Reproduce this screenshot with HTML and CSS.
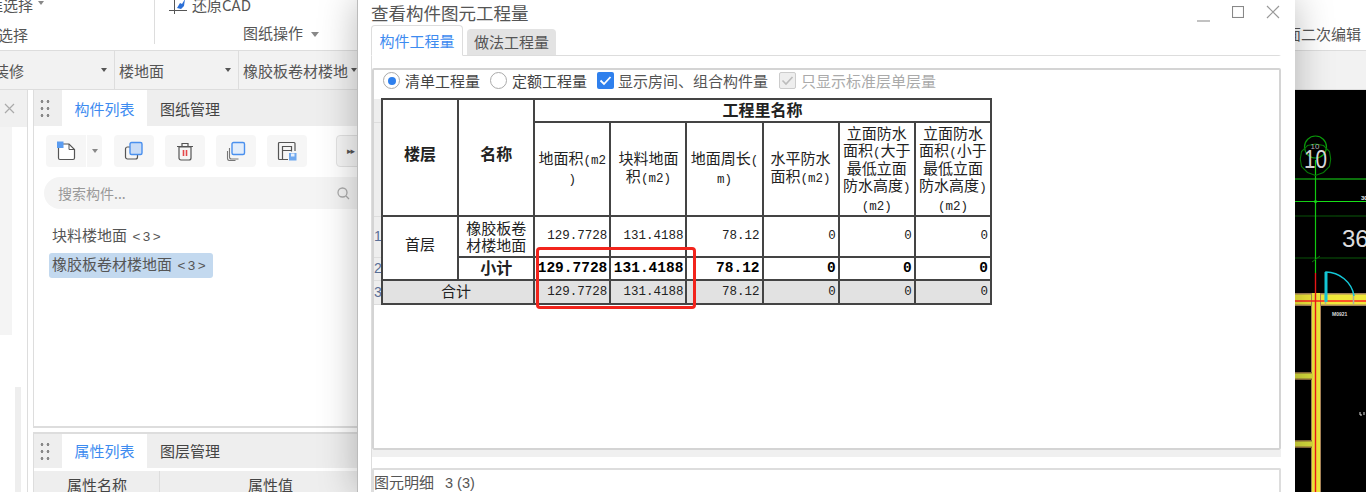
FILE: index.html
```html
<!DOCTYPE html>
<html lang="zh-CN">
<head>
<meta charset="utf-8">
<title>查看构件图元工程量</title>
<link rel="stylesheet" href="styles.css">
</head>
<body>
<div class="app">
  <header class="ribbon">
    <div class="rb-left">
      <div class="rb-line rb-clip">框选择<i class="caret caret-s"></i></div>
      <div class="rb-line rb-sel">选择</div>
    </div>
    <div class="rb-mid">
      <div class="rb-line rb-clip rb-restore">
        <svg class="ic-restore" width="18" height="20" viewBox="0 0 18 20"><path d="M0 15.500H18M5.500 3V19" fill="none" stroke="#555" stroke-width="1"/><path d="M8 13l3-5 2 1 3-5-1 7-3 3z" fill="#2c6fd6"/></svg>
        还原CAD
      </div>
      <div class="rb-line rb-ops">图纸操作<i class="caret"></i></div>
    </div>
    <div class="rb-right">面二次编辑</div>
  </header>

  <div class="selectors">
    <div class="sel sel-1"><span class="sel-t1">装修</span><i class="caret caret-d"></i></div>
    <div class="sel sel-2"><span>楼地面</span><i class="caret caret-d"></i></div>
    <div class="sel sel-3"><span>橡胶板卷材楼地</span><i class="caret caret-d"></i></div>
  </div>

  <div class="work">
    <aside class="side">
      <div class="side-head"><svg width="11" height="11" viewBox="0 0 11 11"><path d="M1 1l9 9M10 1l-9 9" stroke="#aaa" stroke-width="1.200" fill="none"/></svg></div>
      <div class="side-body"><div class="side-gray"></div><div class="side-track"></div></div>
    </aside>

    <section class="panels">
      <div class="panel panel-top">
        <div class="tabs">
          <span class="grip"></span>
          <span class="ptab ptab-on">构件列表</span>
          <span class="ptab">图纸管理</span>
        </div>
        <div class="tools">
          <span class="tbtn tbtn-split">
            <svg width="20" height="20" viewBox="0 0 20 20"><path d="M2.500 3H13l5.500 5.500V17a1.500 1.500 0 0 1-1.500 1.500H4A1.500 1.500 0 0 1 2.500 17z" fill="#fff" stroke="#555" stroke-width="1.200"/><path d="M13 3v5.500h5.500" fill="none" stroke="#555"/><rect x="1" y="0.500" width="6.500" height="6.500" fill="#5b9cf0"/></svg>
          </span><span class="tbtn-drop"><i class="caret caret-xs"></i></span>
          <span class="tbtn">
            <svg width="20" height="20" viewBox="0 0 20 20"><rect x="1.500" y="6" width="12" height="12" rx="2" fill="none" stroke="#555" stroke-width="1.200"/><rect x="6" y="1.500" width="12" height="12" rx="1.500" fill="#c9dcf6" stroke="#4a90ee" stroke-width="1.400"/></svg>
          </span>
          <span class="tbtn">
            <svg width="20" height="20" viewBox="0 0 20 20"><path d="M4 6h12v11a2 2 0 0 1-2 2H6a2 2 0 0 1-2-2z" fill="none" stroke="#555" stroke-width="1.200"/><path d="M2 5.500h16M7 5V2.500h6V5" fill="none" stroke="#555" stroke-width="1.200"/><path d="M8.500 9v6M11.500 9v6" stroke="#e5474a" stroke-width="1.600"/></svg>
          </span>
          <span class="tbtn">
            <svg width="20" height="20" viewBox="0 0 20 20"><path d="M3.500 7v9a2 2 0 0 0 2 2h7M1.500 10v7.500a2 2 0 0 0 2 2h6" fill="none" stroke="#777" stroke-width="1.100"/><rect x="6" y="1.500" width="12.500" height="12" rx="1.500" fill="#e2edfb" stroke="#4a90ee" stroke-width="1.400"/></svg>
          </span>
          <span class="tbtn">
            <svg width="20" height="20" viewBox="0 0 20 20"><path d="M11 18.500H2.500a1 1 0 0 1-1-1V2.500a1 1 0 0 1 1-1H17a1 1 0 0 1 1 1V10" fill="none" stroke="#555" stroke-width="1.200"/><path d="M5.500 18V5.500h9v5M5.500 9.500h9" fill="none" stroke="#555" stroke-width="1.200"/><rect x="12" y="12" width="7.500" height="7.500" fill="#6fa8ee"/><rect x="14" y="12.500" width="3.500" height="3" fill="#e8f0fb"/></svg>
          </span>
          <span class="tbtn tbtn-more"><span class="more">▸▸</span></span>
        </div>
        <div class="search">
          <span class="search-ph">搜索构件...</span>
          <svg class="search-ic" width="13" height="13" viewBox="0 0 13 13"><circle cx="5.500" cy="5.500" r="4.500" fill="none" stroke="#aaa" stroke-width="1.300"/><path d="M9 9l3 3" stroke="#aaa" stroke-width="1.300"/></svg>
        </div>
        <ul class="items">
          <li class="item">块料楼地面 <span class="count">&lt;3&gt;</span></li>
          <li class="item item-on">橡胶板卷材楼地面 <span class="count">&lt;3&gt;</span></li>
        </ul>
      </div>
      <div class="panel panel-bottom">
        <div class="tabs tabs-b">
          <span class="grip"></span>
          <span class="ptab ptab-on">属性列表</span>
          <span class="ptab">图层管理</span>
        </div>
        <div class="prop-head"><span class="prop-a">属性名称</span><span class="prop-b">属性值</span></div>
      </div>
    </section>

    <div class="spacer"></div>

    <div class="cad">
      <svg width="71" height="402" viewBox="0 0 71 402">
        <rect width="71" height="402" fill="#000"/>
        <path d="M0 89H71M0 111.500H71" stroke="#18e018" stroke-width="1"/>
        <path d="M0 126H71M0 168H71" stroke="#0a5a0a" stroke-width="1.200"/>
        <path d="M20.500 70V183" stroke="#12d012" stroke-width="1.200"/>
        <path d="M17 172l8-6" stroke="#0a7a0a"/>
        <circle cx="20.500" cy="111.500" r="1.500" fill="#18e018"/>
        <circle cx="20.500" cy="57" r="11" fill="none" stroke="#0ba00b" stroke-width="1.200"/>
        <path d="M20.500 54l8 1.500 6 6 1.200 7.500-1.200 7.500-6 6-8 3-8-3-6-6-1.200-7.500 1.200-7.500 6-6z" fill="none" stroke="#087f08" stroke-width="1.100"/>
        <text x="20" y="59" class="cad-tiny" text-anchor="middle">10</text>
        <text x="9" y="78" class="cad-big" textLength="23" lengthAdjust="spacingAndGlyphs">10</text>
        <text x="66" y="110" class="cad-mini">30</text>
        <text x="47" y="157" class="cad-num">36</text>
        <rect x="0" y="203" width="71" height="13" fill="#a9865a"/>
        <rect x="0" y="204.500" width="71" height="10" fill="#f0e83a"/>
        <rect x="16" y="203" width="10" height="199" fill="#a9865a"/>
        <rect x="17" y="203" width="8" height="199" fill="#f0e83a"/>
        <path d="M0 211H71" stroke="#f22" stroke-width="1.400"/>
        <path d="M20.500 183V402" stroke="#f01818" stroke-width="1.400"/>
        <path d="M30.500 204V214M58.500 204V214" stroke="#b0b0a0" stroke-width="1.500"/>
        <path d="M31 212V182c13 0 26 10 28 24" fill="none" stroke="#14c8d8" stroke-width="1.500"/>
        <path d="M31 212V182" fill="none" stroke="#14c8d8" stroke-width="3"/>
        <text x="37" y="226" class="cad-mini cad-door">M0921</text>
        <rect x="0" y="282" width="17" height="8" fill="#8a6a3a"/>
        <rect x="0" y="283.500" width="18" height="5" fill="#d8dc3c"/>
        <rect x="0" y="350" width="17" height="8" fill="#8a6a3a"/>
        <rect x="0" y="351.500" width="18" height="5" fill="#d8dc3c"/>
        <path d="M65 322v3h2M69 322v3" stroke="#ddd" stroke-width="1"/>
      </svg>
    </div>
  </div>

  <div class="dialog">
    <div class="dlg-title">
      <span class="dlg-name">查看构件图元工程量</span>
      <div class="dlg-ctrl">
        <svg width="13" height="13" viewBox="0 0 13 13"><path d="M0 12H13" stroke="#999" stroke-width="1.200"/></svg>
        <svg width="12" height="12" viewBox="0 0 12 12"><rect x="0.500" y="0.500" width="11" height="11" fill="none" stroke="#888" stroke-width="1.100"/></svg>
        <svg width="14" height="14" viewBox="0 0 14 14"><path d="M1 1l12 12M13 1L1 13" stroke="#999" stroke-width="1.200"/></svg>
      </div>
    </div>
    <div class="dlg-tabs">
      <span class="dtab dtab-on">构件工程量</span>
      <span class="dtab">做法工程量</span>
    </div>
    <div class="pane">
      <div class="inner">
        <div class="opts">
          <span class="radio radio-on"></span><span class="opt opt-a">清单工程量</span>
          <span class="radio radio-2"></span><span class="opt opt-b">定额工程量</span>
          <span class="check"><svg width="17" height="17" viewBox="0 0 17 17"><path d="M3.500 8.500l3.500 3.500 6.500-7" fill="none" stroke="#fff" stroke-width="1.800"/></svg></span><span class="opt opt-c">显示房间、组合构件量</span>
          <span class="check check-off"><svg width="17" height="17" viewBox="0 0 17 17"><path d="M3.500 8.500l3.500 3.500 6.500-7" fill="none" stroke="#bbb" stroke-width="1.600"/></svg></span><span class="opt opt-off">只显示标准层单层量</span>
        </div>
        <div class="table-wrap">
          <table class="qty">
            <colgroup>
              <col class="c-idx"><col class="c-w"><col class="c-w"><col class="c-w"><col class="c-w"><col class="c-w"><col class="c-w"><col class="c-w"><col class="c-w">
            </colgroup>
            <tr class="r-h1">
              <td class="idx"></td>
              <th class="th-span" rowspan="2">楼层</th>
              <th class="th-span" rowspan="2">名称</th>
              <th class="th-top" colspan="6">工程里名称</th>
            </tr>
            <tr class="r-h2">
              <td class="idx"></td>
              <td class="hc">地面积<span class="n">(m2</span><br><span class="n">)</span></td>
              <td class="hc">块料地面<br>积<span class="n">(m2)</span></td>
              <td class="hc">地面周长<span class="n">(</span><br><span class="n">m)</span></td>
              <td class="hc">水平防水<br>面积<span class="n">(m2)</span></td>
              <td class="hc tight">立面防水<br>面积<span class="n">(</span>大于<br>最低立面<br>防水高度<span class="n">)</span><br><span class="n">(m2)</span></td>
              <td class="hc tight">立面防水<br>面积<span class="n">(</span>小于<br>最低立面<br>防水高度<span class="n">)</span><br><span class="n">(m2)</span></td>
            </tr>
            <tr class="r-1">
              <td class="idx">1</td>
              <td class="ctr floor" rowspan="2">首层</td>
              <td class="ctr name">橡胶板卷<br>材楼地面</td>
              <td class="v">129.7728</td><td class="v">131.4188</td><td class="v">78.12</td><td class="v">0</td><td class="v">0</td><td class="v">0</td>
            </tr>
            <tr class="r-2">
              <td class="idx">2</td>
              <th class="th-sub">小计</th>
              <td class="v b">129.7728</td><td class="v b">131.4188</td><td class="v b">78.12</td><td class="v b">0</td><td class="v b">0</td><td class="v b">0</td>
            </tr>
            <tr class="r-3">
              <td class="idx">3</td>
              <td class="ctr total" colspan="2">合计</td>
              <td class="v">129.7728</td><td class="v">131.4188</td><td class="v">78.12</td><td class="v">0</td><td class="v">0</td><td class="v">0</td>
            </tr>
          </table>
          <div class="mark"></div>
        </div>
      </div>
      <div class="band"></div>
      <div class="detail">图元明细<span class="detail-n">3 (3)</span></div>
    </div>
  </div>
</div>
</body>
</html>
```
FILE: styles.css
```css
* { box-sizing: border-box; }
html, body { margin: 0; padding: 0; }
body {
  width: 1366px; height: 492px; overflow: hidden; background: #fff;
  font-family: "Noto Sans CJK SC", "Liberation Sans", sans-serif;
  font-size: 15px; color: #555;
}
.app { position: relative; width: 1366px; height: 492px; overflow: hidden; display: flex; flex-direction: column; }

.caret { display: inline-block; width: 0; height: 0; border: 4px solid transparent; border-top: 5px solid #888; border-bottom: 0; margin-left: 8px; vertical-align: middle; }
.caret-s { border-width: 4px 3px 0; margin-left: 5px; vertical-align: 6px; }
.caret-d { border-width: 4px 3px 0; border-top-color: #555; margin-left: 0; }
.caret-xs { border-width: 4px 3px 0; margin-left: 0; }

/* ribbon */
.ribbon { height: 51px; flex: none; display: flex; border-bottom: 1px solid #ddd; background: #fff; overflow: hidden; }
.rb-left { width: 155px; border-right: 1px solid #ddd; height: 44px; }
.rb-line { line-height: 20px; white-space: nowrap; }
.rb-clip { margin-top: -5px; height: 20px; }
.rb-left .rb-clip { margin-left: -12px; }
.rb-sel { margin-top: 10px; margin-left: -2px; }
.rb-mid { width: 1138px; padding-left: 14px; }
.rb-restore { display: flex; align-items: center; gap: 5px; }
.rb-ops { margin-top: 8px; margin-left: 74px; }
.rb-right { flex: 1; white-space: nowrap; padding-top: 23px; margin-left: -7px; }

/* selector row */
.selectors { height: 39px; flex: none; display: flex; background: #f2f2f2; border-bottom: 1px solid #ddd; }
.sel { display: flex; align-items: center; justify-content: space-between; border-right: 1px solid #ddd; padding: 0 7px 0 4px; white-space: nowrap; height: 38px; }
.sel-1 { width: 115px; padding-left: 0; }
.sel-t1 { margin-left: -6px; }
.sel-2 { width: 124px; }
.sel-3 { width: 124px; padding-right: 6px; border-right: 0; flex: none; }

/* workspace */
.work { flex: 1; display: flex; min-height: 0; background: #fff; }
.side { width: 28px; flex: none; border-right: 1px solid #ddd; }
.side-head { height: 37px; background: #f0f0f0; padding: 13px 0 0 4px; line-height: 0; }
.side-body { position: relative; height: 365px; }
.side-gray { width: 12px; height: 208px; background: #f4f4f4; }
.side-track { width: 6px; height: 105px; margin: 52px 0 0 15px; background: #eee; }

.panels { width: 324px; margin-left: 5px; flex: none; display: flex; flex-direction: column; overflow: hidden; }
.panel { border-left: 1px solid #ddd; }
.panel-top { height: 338px; flex: none; border-bottom: 2px solid #ddd; }
.panel-bottom { flex: 1; min-height: 0; margin-top: 4px; border-top: 2px solid #ddd; overflow: hidden; }
.tabs { height: 36px; background: #eee; display: flex; align-items: stretch; padding-left: 28px; position: relative; }
.tabs-b { height: 34px; }
.grip { width: 12px; height: 21px; position: absolute; left: 5px; top: 8px; background-image: radial-gradient(circle, #888 1.300px, transparent 1.600px); background-size: 6px 7px; }
.tabs-b .grip { top: 7px; }
.ptab { width: 85px; text-align: center; line-height: 38px; color: #444; }
.tabs-b .ptab { line-height: 34px; }
.ptab-on { background: #fff; color: #3d8bf0; }
.tabs .ptab + .ptab { width: 86px; }

.tools { display: flex; align-items: flex-start; padding: 9px 0 0 12px; height: 41px; }
.tbtn { width: 40px; height: 32px; background: #f6f6f6; border-radius: 4px; display: flex; align-items: center; justify-content: center; margin-right: 11px; flex: none; }
.tbtn-split { border-radius: 4px 0 0 4px; margin-right: 1px; }
.tbtn-drop { width: 15px; height: 32px; background: #f6f6f6; border-radius: 0 4px 4px 0; margin-right: 12px; display: flex; align-items: center; justify-content: center; flex: none; }
.tbtn-more { margin-left: 18px; border: 1px solid #e2e2e2; background: #f6f6f6; justify-content: flex-start; padding-left: 10px; }
.more { font-size: 9px; color: #555; letter-spacing: -1px; font-family: "DejaVu Sans", sans-serif; }

.search { margin: 10px 0 0 10px; height: 32px; width: 340px; background: #f4f4f4; border-radius: 16px; display: flex; align-items: center; padding-left: 14px; position: relative; }
.search-ph { font-size: 14px; color: #999; }
.search-ic { margin-left: 211px; }
.items { list-style: none; margin: 15px 0 0; padding: 0 0 0 15px; }
.item { height: 25px; line-height: 22px; padding-left: 3px; color: #555; font-size: 15px; white-space: nowrap; }
.item + .item { margin-top: 4px; }
.item-on { background: #c3d9ef; width: 164px; border-radius: 3px; }
.count { font-family: "Liberation Sans", sans-serif; font-size: 13.500px; letter-spacing: 2.500px; margin-left: 2px; }
.prop-head { margin-top: 3px; background: #eee; height: 24px; display: flex; color: #444; position: relative; line-height: 28px; }
.prop-a { width: 126px; padding-left: 33px; border-right: 1px solid #ddd; flex: none; }
.prop-b { padding-left: 88px; }

.spacer { width: 938px; flex: none; }
.cad { flex: 1; line-height: 0; background: #000; overflow: hidden; }
.cad text { font-family: "Liberation Sans", sans-serif; }
.cad-tiny { font-size: 8px; fill: #bbb; }
.cad-big { font-size: 26px; fill: #ddd; }
.cad-mini { font-size: 6px; fill: #eee; font-weight: bold; }
.cad-door { font-size: 5px; fill: #ddd; }
.cad-num { font-size: 24px; fill: #ddd; }

/* dialog window */
.dialog { position: absolute; left: 357px; top: 0; width: 938px; height: 492px; background: #fff; border-left: 1px solid #bbb; box-shadow: 0 0 36px rgba(0,0,0,.28); padding-left: 13px; display: flex; flex-direction: column; }
.dlg-title { height: 25px; flex: none; display: flex; justify-content: space-between; }
.dlg-name { font-size: 17.500px; line-height: 25px; color: #555; white-space: nowrap; }
.dlg-ctrl { display: flex; align-items: flex-start; padding: 5px 15px 0 0; gap: 22px; }
.dlg-ctrl svg:nth-child(1) { margin-top: 4px; }
.dlg-ctrl svg:nth-child(2) { margin-top: 1px; }
.dlg-ctrl svg:nth-child(3) { margin-top: 0; }
.dlg-tabs { height: 30px; flex: none; display: flex; align-items: flex-end; gap: 4px; position: relative; z-index: 1; }
.dtab { width: 89px; height: 26px; background: #e3e3e3; border-radius: 4px 4px 0 0; text-align: center; line-height: 25px; color: #555; }
.dtab-on { width: 92px; height: 31px; background: #fff; color: #3d8bf0; border: 1px solid #ddd; border-bottom: 1px solid #fff; line-height: 29px; margin-bottom: -1px; }
.pane { width: 910px; flex: 1; min-height: 0; border: 2px solid #ddd; border-bottom: 0; border-left-width: 1px; border-top-width: 1px; border-right-color: #fff; padding-top: 12px; display: flex; flex-direction: column; }
.inner { height: 382px; flex: none; border: 2px solid #d4d4d4; border-radius: 2px; margin-right: -2px; }
.opts { height: 21px; margin-bottom: 7px; display: flex; align-items: center; padding-left: 9px; color: #444; white-space: nowrap; }
.radio { width: 17px; height: 17px; border: 1px solid #aaa; border-radius: 50%; flex: none; background: #fff; position: relative; }
.radio-on { display: flex; align-items: center; justify-content: center; }
.radio-on::after { content: ""; width: 8px; height: 8px; border-radius: 50%; background: #2f80ed; }
.radio-2 { margin-left: 10px; }
.opt { margin-left: 5px; }
.check { width: 17px; height: 17px; background: #2f80ed; border-radius: 2px; margin-left: 10px; flex: none; line-height: 0; }
.check-off { background: #eee; border: 1px solid #ccc; margin-left: 11px; }
.check-off svg { margin: -1px; }
.opt-c { margin-left: 4px; color: #555; }
.opt-off { margin-left: 5px; color: #aaa; }

.table-wrap { position: relative; width: 620px; }
.qty { border-collapse: collapse; table-layout: fixed; width: 618px; color: #222; }
.qty th, .qty td { border: 2px solid #444; padding: 0 2px; text-align: center; overflow: hidden; line-height: 17px; font-weight: 400; }
.qty th { font-weight: 700; font-size: 16px; }
.qty .th-span { padding-bottom: 8px; }
.qty .th-top { padding-bottom: 2px; }
.qty .th-sub { padding-bottom: 3px; }
.qty .floor { padding-bottom: 9px; }
.qty .total { padding: 0 4px 3px 0; }
.c-idx { width: 8px; }
.c-w { width: 76px; }
.qty .idx { border: 0; border-bottom: 1px solid #ddd; padding: 0; background: #eee; color: #5a6f96; font-family: "Liberation Sans", sans-serif; font-size: 14px; text-align: left; }
.qty .hc { font-size: 15px; line-height: 18px; padding-bottom: 3px; }
.qty .tight { line-height: 17px; font-size: 15px; padding-bottom: 1px; }
.n { font-family: "Liberation Mono", monospace; font-size: 12.500px; line-height: 1; }
.r-h1 { height: 23px; }
.r-h2 { height: 94px; }
.r-1 { height: 41px; }
.r-2 { height: 23px; }
.r-3 { height: 24px; }
.qty .v { text-align: right; font-family: "Liberation Mono", monospace; font-size: 12.500px; padding: 0 2px 0 0; white-space: nowrap; }
.qty .b { font-weight: 700; font-size: 14.500px; color: #000; }
.r-3 td { background: #e2e2e2; }
.qty .name { line-height: 17px; padding-bottom: 1px; }
.mark { position: absolute; left: 162px; top: 149px; width: 160px; height: 62px; border: 3px solid #f2241c; border-radius: 4px; }

.band { height: 7px; background: #f0f0f0; flex: none; margin-right: -2px; }
.detail { margin-top: 11px; flex: 1; border: 2px solid #ddd; border-bottom: 0; border-radius: 2px 2px 0 0; padding: 1px 0 0 0; line-height: 22px; color: #555; white-space: nowrap; margin-right: -2px; }
.detail-n { font-family: "Liberation Sans", sans-serif; font-size: 14.500px; margin-left: 11px; }
```
